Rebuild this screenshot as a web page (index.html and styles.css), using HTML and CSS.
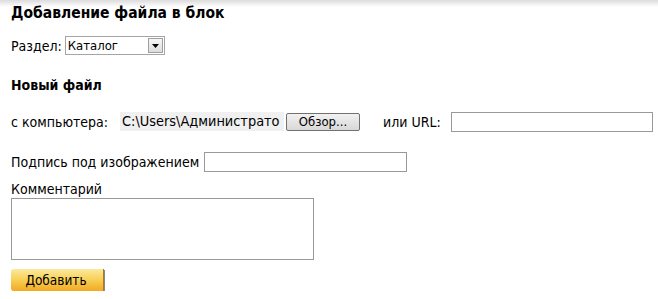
FILE: index.html
```html
<!DOCTYPE html>
<html lang="ru">
<head>
    <meta charset="UTF-8"/>
    <title>Добавление файла в блок</title>
    <link rel="stylesheet" href="styles.css">
</head>
<body>
<div class="page">
    <h1>Добавление файла в блок</h1>

    <div class="row section-row">
        <label for="section">Раздел:</label>
        <div class="select">
            <select id="section">
                <option>Каталог</option>
            </select>
            <span class="select-arrow">
                <svg width="7" height="4" viewBox="0 0 7 4"><path d="M0 0h7L3.5 4z" fill="#000"/></svg>
            </span>
        </div>
    </div>

    <h2>Новый файл</h2>

    <div class="row file-row">
        <span class="label">с компьютера:</span>
        <span class="file-path">C:\Users\Администрато</span>
        <button class="browse" type="button">Обзор...</button>
        <label class="url-label" for="url">или URL:</label>
        <input id="url" class="text url" type="text">
    </div>

    <div class="row caption-row">
        <label for="caption">Подпись под изображением</label>
        <input id="caption" class="text caption" type="text">
    </div>

    <div class="comment">
        <label for="comment">Комментарий</label>
        <textarea id="comment"></textarea>
    </div>

    <button class="submit" type="button">Добавить</button>
</div>
</body>
</html>
```

FILE: styles.css
```css
body {
    margin: 0;
    font-family: "DejaVu Sans Condensed", "DejaVu Sans", sans-serif;
    font-size: 14px;
    color: #000;
    background: #fff linear-gradient(#dcdcdc, #fff 7px) no-repeat;
}

.page {
    padding: 4px 0 0 11px;
}

h1 {
    margin: 0;
    font-size: 15.5px;
    line-height: 18px;
    font-weight: bold;
}

h2 {
    margin: 22px 0 0;
    font-size: 14px;
    line-height: 16px;
    font-weight: bold;
}

.row {
    display: flex;
    align-items: center;
}

.row > * {
    flex-shrink: 0;
}

.section-row {
    margin-top: 14px;
}

.section-row label {
    margin-right: 3px;
}

.select {
    display: flex;
    align-items: center;
    width: 98px;
    height: 17px;
    border: 1px solid #a5a5a5;
    background: #fff;
}

.select select {
    appearance: none;
    flex: 1;
    min-width: 0;
    border: 0;
    padding: 0 2px;
    margin: 0;
    background: transparent;
    font: inherit;
    font-size: 13px;
    color: #000;
    outline: none;
}

.select-arrow {
    display: flex;
    align-items: center;
    justify-content: center;
    width: 15px;
    height: 15px;
    margin-right: 1px;
    border: 1px solid #a0a0a0;
    background: linear-gradient(#f6f6f6, #dcdcdc);
    box-sizing: border-box;
}

.file-row {
    margin-top: 19px;
    height: 19px;
}

.file-row .label {
    width: 109px;
}

.file-path {
    width: 164px;
    height: 19px;
    line-height: 19px;
    padding-left: 2px;
    box-sizing: border-box;
    background: #f0f0f0;
    overflow: hidden;
    white-space: nowrap;
    font-size: 14.4px;
}

.browse {
    width: 74px;
    height: 18px;
    margin-left: 2px;
    padding: 0;
    border: 1px solid #707070;
    border-radius: 2px;
    background: linear-gradient(#f2f2f2, #e4e4e4 50%, #d8d8d8);
    font: inherit;
    font-size: 13px;
    color: #000;
}

.url-label {
    margin-left: 23px;
    width: 68px;
}

.text {
    height: 20px;
    border: 1px solid #999;
    padding: 0 2px;
    margin: 0;
    box-sizing: border-box;
    font: inherit;
}

.url {
    width: 202px;
}

.caption-row {
    margin-top: 21px;
}

.caption-row label {
    margin-right: 5px;
}

.caption {
    width: 203px;
}

.comment {
    margin-top: 9px;
}

.comment label {
    display: block;
    line-height: 16px;
}

.comment textarea {
    display: block;
    width: 303px;
    height: 62px;
    margin: 1px 0 0;
    border: 1px solid #999;
    box-sizing: border-box;
    resize: none;
    font: inherit;
}

.submit {
    display: block;
    width: 93px;
    height: 22px;
    margin-top: 9px;
    padding: 0 2px 0 0;
    border: 0;
    border-right: 1px solid #b07a1a;
    border-radius: 3px 0 0 3px;
    background: linear-gradient(#fbe9a0, #f8d25a 45%, #f2a923);
    box-shadow: 1px 1px 0 #8a8a8a;
    font: inherit;
    font-size: 13.5px;
    color: #000;
}
```
